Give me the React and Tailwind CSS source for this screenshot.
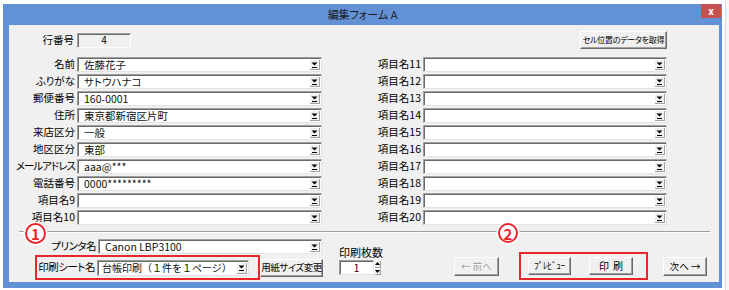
import React from 'react'

const DropArrow = () => (
  <svg width="7" height="6" viewBox="0 0 7 6" className="block">
    <path d="M0.5 0.5h6L3.5 3.5z" fill="#000" />
    <rect x="1" y="5" width="5" height="1" fill="#000" />
  </svg>
)

const Combo = ({ value = '', className = '', textClass = 'text-[10.5px] pl-[6px]' }) => (
  <div
    className={`flex items-stretch bg-white border border-t-[#a0a0a0] border-l-[#a0a0a0] border-r-[#e3e3e3] border-b-[#e3e3e3] shadow-[inset_1px_1px_0_#696969] ${className}`}
  >
    <div className={`flex-1 flex items-center pt-[1px] leading-none text-[#111] whitespace-nowrap overflow-hidden ${textClass}`}>
      {value}
    </div>
    <div className="w-[11px] my-[1px] mr-[1px] flex items-center justify-center bg-[#f0f0f0] shadow-[inset_1px_1px_0_#fff,inset_-1px_-1px_0_#a0a0a0]">
      <DropArrow />
    </div>
  </div>
)

const Button = ({ children, className = '', disabled = false }) => (
  <div
    className={`flex items-center justify-center bg-[#f0f0f0] border border-t-white border-l-white border-r-[#696969] border-b-[#696969] shadow-[inset_-1px_-1px_0_#a0a0a0] leading-none whitespace-nowrap ${
      disabled ? 'text-[#a0a0a0] [text-shadow:1px_1px_0_#fff]' : 'text-black'
    } ${className}`}
  >
    {children}
  </div>
)

const Badge = ({ n, className = '' }) => (
  <div
    className={`absolute flex items-center justify-center rounded-full bg-white border-2 border-[#e8262c] text-[#e8262c] font-bold text-[15px] leading-none shadow-[0_0_0_1.5px_#fff] ${className}`}
  >
    {n}
  </div>
)

const leftRows = [
  ['名前', '佐藤花子'],
  ['ふりがな', 'サトウハナコ'],
  ['郵便番号', '160-0001'],
  ['住所', '東京都新宿区片町'],
  ['来店区分', '一般'],
  ['地区区分', '東部'],
  ['メールアドレス', 'aaa@***'],
  ['電話番号', '0000*********'],
  ['項目名9', ''],
  ['項目名10', ''],
]

const rightRows = Array.from({ length: 10 }, (_, i) => `項目名${i + 11}`)

export default function App() {
  return (
    <div className="w-[729px] h-[290px] bg-white overflow-hidden font-['Noto_Sans_CJK_JP','Noto_Sans',sans-serif] [font-feature-settings:'palt'] text-black">
      <div className="flex">
        <div className="ml-[3px] mt-[4px] w-[719px] h-[284px] bg-[#6391d6] pl-[6px] pr-[3px] pb-[6px] flex flex-col">
          {/* title bar */}
          <div className="relative h-[21px] flex items-center justify-center text-[11px] text-[#1a1a1a] -ml-[6px] -mr-[3px]">
            編集フォーム A
            <div className="absolute right-[1px] top-0 w-[20px] h-[14px] bg-[#c75050] flex items-center justify-center text-white text-[10px] font-bold leading-none">
              x
            </div>
          </div>

          {/* client */}
          <div className="w-[710px] h-[257px] bg-[#f0f0f0] flex flex-col">
            {/* top row */}
            <div className="mt-[6px] h-[18px] flex items-center">
              <div className="w-[68px] pr-[3px] text-right text-[10.5px] leading-none">行番号</div>
              <div className="w-[54px] h-[15px] flex items-center justify-center text-[10px] leading-none border border-t-[#a0a0a0] border-l-[#a0a0a0] border-r-white border-b-white shadow-[inset_1px_1px_0_#696969]">
                4
              </div>
              <Button className="ml-auto mr-[52px] w-[87px] h-[18px] text-[8px] tracking-[-0.3px]">
                セル位置のデータを取得
              </Button>
            </div>

            {/* fields */}
            <div className="mt-[8px] flex">
              <div className="w-[313px] flex flex-col gap-[2px]">
                {leftRows.map(([label, value]) => (
                  <div key={label} className="h-[15px] flex items-center">
                    <div
                      className={`w-[68px] pr-[2px] text-right text-[10.5px] leading-none whitespace-nowrap ${
                        label === 'メールアドレス' ? 'tracking-[-1px]' : ''
                      }`}
                    >
                      {label}
                    </div>
                    <Combo value={value} className="w-[245px] h-[15px]" />
                  </div>
                ))}
              </div>
              <div className="flex flex-col gap-[2px]">
                {rightRows.map((label) => (
                  <div key={label} className="h-[15px] flex items-center">
                    <div className="w-[101px] pr-[2px] text-right text-[10.5px] leading-none">{label}</div>
                    <Combo className="w-[244px] h-[15px]" />
                  </div>
                ))}
              </div>
            </div>

            {/* separator */}
            <div className="relative mt-[6px] ml-[10px] w-[691px] h-[2px] border-t border-t-[#a0a0a0] border-b border-b-white">
              <Badge n="1" className="left-[6px] -top-[9px] w-[21px] h-[21px]" />
              <Badge n="2" className="left-[479px] -top-[9px] w-[20px] h-[20px]" />
            </div>

            {/* bottom */}
            <div className="flex items-start">
              <div className="ml-[26px] w-[288px] flex flex-col">
                <div className="mt-[6px] h-[15px] flex items-center">
                  <div className="w-[63px] pr-[2px] text-right text-[10.5px] leading-none tracking-[-0.5px]">プリンタ名</div>
                  <Combo value="Canon LBP3100" className="w-[224px] h-[15px]" />
                </div>
                <div className="mt-[1px] flex items-start">
                  <div className="w-[225px] h-[25px] border-2 border-[#e8262c] flex items-center">
                    <div className="w-[60px] pr-[2px] text-right text-[10.5px] leading-none tracking-[-0.5px] whitespace-nowrap">
                      印刷シート名
                    </div>
                    <Combo
                      value="台帳印刷（１件を１ページ）"
                      className="w-[152px] h-[16px]"
                      textClass="text-[10px] pl-[4px] [font-feature-settings:normal]"
                    />
                  </div>
                  <Button className="mt-[4px] w-[63px] h-[18px] text-[9.5px] tracking-[-0.5px]">用紙サイズ変更</Button>
                </div>
              </div>

              <div className="ml-[16px] flex flex-col">
                <div className="mt-[12px] h-[14px] text-[11px] leading-[14px] whitespace-nowrap">印刷枚数</div>
                <div className="mt-[1px] flex h-[15px]">
                  <div className="w-[35px] h-[15px] bg-white flex items-center justify-center text-[10px] leading-none border border-t-[#a0a0a0] border-l-[#a0a0a0] border-r-[#e3e3e3] border-b-[#e3e3e3] shadow-[inset_1px_1px_0_#696969]">
                    1
                  </div>
                  <div className="w-[7px] flex flex-col">
                    <div className="flex-1 flex items-center justify-center bg-[#f0f0f0] shadow-[inset_1px_1px_0_#fff,inset_-1px_-1px_0_#a0a0a0]">
                      <svg width="5" height="3" viewBox="0 0 5 3"><path d="M2.5 0L5 3H0z" fill="#000" /></svg>
                    </div>
                    <div className="flex-1 flex items-center justify-center bg-[#f0f0f0] shadow-[inset_1px_1px_0_#fff,inset_-1px_-1px_0_#a0a0a0]">
                      <svg width="5" height="3" viewBox="0 0 5 3"><path d="M0 0h5L2.5 3z" fill="#000" /></svg>
                    </div>
                  </div>
                </div>
              </div>

              <Button disabled className="ml-[71px] mt-[24px] w-[45px] h-[19px] text-[9.5px]">
                ← 前へ
              </Button>

              <div className="ml-[20px] mt-[19px] w-[129px] h-[28px] border-2 border-[#e8262c] flex items-start">
                <Button className="ml-[7px] mt-[3px] w-[43px] h-[18px] text-[9.5px] tracking-[-0.5px]">ﾌﾟﾚﾋﾞｭｰ</Button>
                <Button className="ml-[18px] mt-[3px] w-[44px] h-[18px] text-[10px] tracking-[4px] pl-[4px]">印刷</Button>
              </div>

              <Button className="ml-[15px] mt-[24px] w-[44px] h-[19px] text-[9.5px]">次へ →</Button>
            </div>
          </div>
        </div>
        <div className="flex-1 h-[290px] bg-[#f7f7f7] border-l border-l-[#d9d9d9] ml-[3px]" />
      </div>
    </div>
  )
}
